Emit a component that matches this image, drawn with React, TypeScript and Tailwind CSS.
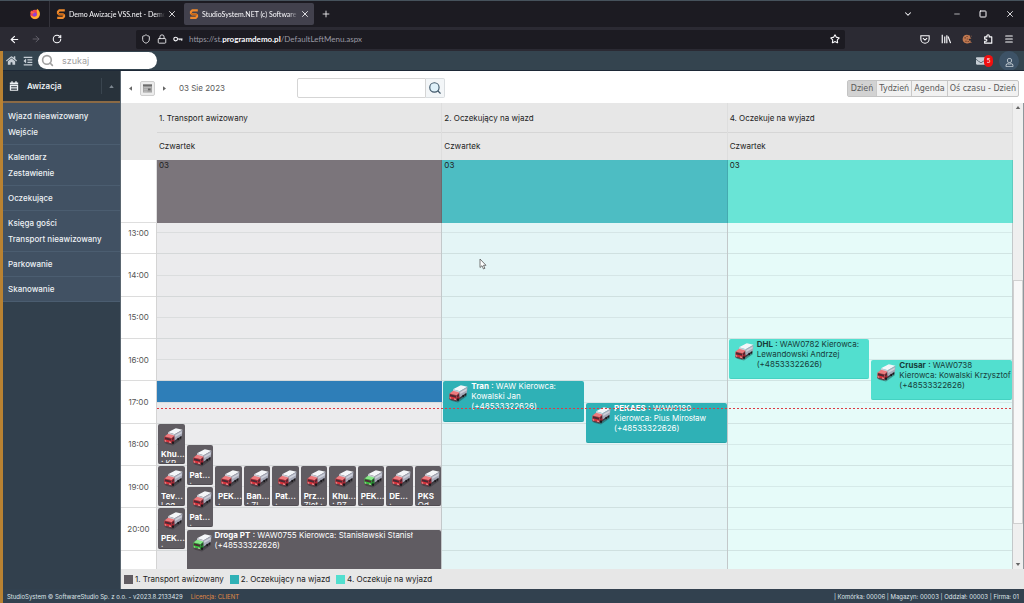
import React from "react";
import {
  ArrowLeft,
  ArrowRight,
  ChevronDown,
  Lock,
  Menu,
  Minus,
  Plus,
  RotateCw,
  Search,
  Shield,
  Square,
  Star,
  X,
} from "lucide-react";
import { FaHome, FaEnvelope, FaOutdent, FaRegUser } from "react-icons/fa";

const FIRST_HOUR = 13;
const HOURS = [13, 14, 15, 16, 17, 18, 19, 20, 21];
const LAST_LABEL = 20;

type Tone = "gray" | "teal" | "mint";

type Visit = {
  name: string;
  details: string;
  start: number;
  slot: number;
  span: number;
  slots: number;
  small?: boolean;
  green?: boolean;
};

type Lane = {
  title: string;
  tone: Tone;
  allDay: string;
  body: string;
  event: string;
  swatch: string;
  visits: Visit[];
};

const small = (name: string, details: string, start: number, slot: number, green = false): Visit => ({
  name,
  details,
  start,
  slot,
  span: 1,
  slots: 10,
  small: true,
  green,
});

const LANES: Lane[] = [
  {
    title: "1. Transport awizowany",
    tone: "gray",
    allDay: "bg-[#7b757b]",
    body: "bg-[#ebebed]",
    event: "bg-[#605c62] border-[#504c52] text-white",
    swatch: "bg-[#605c62]",
    visits: [
      small("Khu...", ": KR", 18, 0),
      small("Pat...", ":", 18.5, 1),
      small("Tev...", "Log", 19, 0),
      small("Pat...", ":", 19.5, 1),
      small("PEK...", ":", 20, 0),
      small("PEK...", ":", 19, 2),
      small("Ban...", ": ZL", 19, 3),
      small("Pat...", ":", 19, 4),
      small("Prz...", "Zlot :", 19, 5),
      small("Khu...", ": PZ", 19, 6),
      small("PEK...", ":", 19, 7, true),
      small("DE...", ":", 19, 8),
      small("PKS", "Od", 19, 9),
      {
        name: "Droga PT",
        details: "WAW0755 Kierowca: Stanisławski Stanisł (+48533322626)",
        start: 20.5,
        slot: 1,
        span: 9,
        slots: 10,
        green: true,
      },
    ],
  },
  {
    title: "2. Oczekujący na wjazd",
    tone: "teal",
    allDay: "bg-[#4dbdc3]",
    body: "bg-[#e4f5f6]",
    event: "bg-[#2fb1b6] border-[#27a3a8] text-white",
    swatch: "bg-[#2fb1b6]",
    visits: [
      { name: "Tran", details: "WAW Kierowca: Kowalski Jan (+48533322626)", start: 17, slot: 0, span: 1, slots: 2 },
      { name: "PEKAES", details: "WAW0180 Kierowca: Pius Mirosław (+48533322626)", start: 17.5, slot: 1, span: 1, slots: 2 },
    ],
  },
  {
    title: "4. Oczekuje na wyjazd",
    tone: "mint",
    allDay: "bg-[#69e4d6]",
    body: "bg-[#e6fbf9]",
    event: "bg-[#52dfcf] border-[#45d2c2] text-[#173c3a]",
    swatch: "bg-[#52dfcf]",
    visits: [
      { name: "DHL", details: "WAW0782 Kierowca: Lewandowski Andrzej (+48533322626)", start: 16, slot: 0, span: 1, slots: 2 },
      { name: "Crusar", details: "WAW0738 Kierowca: Kowalski Krzysztof (+48533322626)", start: 16.5, slot: 1, span: 1, slots: 2 },
    ],
  },
];

const MENU = [
  ["Wjazd nieawizowany", "Wejście"],
  ["Kalendarz", "Zestawienie"],
  ["Oczekujące"],
  ["Księga gości", "Transport nieawizowany"],
  ["Parkowanie"],
  ["Skanowanie"],
];

const hourOffset = (hour: number) => `${((hour - FIRST_HOUR) / HOURS.length) * 100}%`;

function Truck({ green }: { green?: boolean }) {
  const cab = green ? "#35b83a" : "#d62f38";
  const side = green ? "#1f8a2b" : "#a32430";
  const light = green ? "#86e886" : "#ee7a7d";
  return (
    <svg viewBox="0 0 20 20" className="size-5 shrink-0" aria-hidden="true">
      <path d="M2 16.500l8 2 9-6.500-1-2z" fill="#29252b" opacity=".4" />
      <path d="M10 13.500l8.500-5.300v2.200L10 16.200z" fill="#3a373e" />
      <path d="M5 5.200L12.800 1.300l6.700 1.500-7.800 4.400z" fill="#f4f6f9" />
      <path d="M11.700 7.200l7.800-4.400-.6 6-7.700 4.900z" fill="#a6a9b8" />
      <path d="M12.300 8l6.500-3.600-.2 2-6.400 3.500z" fill="#cdd0da" />
      <path d="M5 5.200l6.700 2-.4 3.300L5 8.500z" fill="#c9ccd6" />
      <path d="M1.500 9.500L5 6.700l6.300 1.900-2.500 2.700z" fill={light} />
      <path d="M1.500 9.500l7.300 1.800-.5 5.700-7-2z" fill={cab} />
      <path d="M8.800 11.300l2.500-2.700.1 5.900-3.100 2.500z" fill={side} />
      <path d="M2 10.200l6.100 1.600-.2 2-6.100-1.600z" fill="#4b2a35" />
      <path d="M9.300 11.700l1.500-1.700v2l-1.600 1.200z" fill="#3a2630" />
      <path d="M1.300 14.300l7 1.900v1.400l-6.800-2z" fill="#55414a" />
      <path d="M1.800 13.400l1.400.4v.8l-1.400-.4zM6.300 14.600l1.400.4v.8l-1.400-.4z" fill="#fbe9e0" />
      <ellipse cx="10" cy="15.700" rx="1" ry="1.400" fill="#19171b" />
      <ellipse cx="15.200" cy="12" rx=".9" ry="1.200" fill="#19171b" />
      <ellipse cx="17.400" cy="10.600" rx=".8" ry="1.100" fill="#19171b" />
    </svg>
  );
}

function SiteIcon() {
  return (
    <svg viewBox="0 0 12 12" className="size-3 shrink-0" aria-hidden="true">
      <path d="M9.800 2.300H4.400L3 3.700v1.500l1.200 1.100h3.700l1.100 1v1.300L7.700 9.800H2.200" fill="none" stroke="#ef8a2c" strokeWidth="2.200" />
      <path d="M3 5.200l1.200 1.100h3.700l1.100 1" fill="none" stroke="#c96514" strokeWidth="1.200" />
    </svg>
  );
}

function Firefox() {
  return (
    <svg viewBox="0 0 12 12" className="size-3" aria-hidden="true">
      <circle cx="6" cy="6.500" r="4.700" fill="#ef3f53" />
      <path d="M8 .8c2.300 1.500 3.200 3.600 2.800 6C10.300 9.600 8.300 11 6 11 3.400 11 1.700 9.200 1.500 7c1.700 2 5 2.300 6.300.2C9 5.200 7 4 8 .8z" fill="#ffb02e" />
      <circle cx="5.700" cy="6.500" r="2" fill="#8b43d6" />
      <path d="M1.400 5L2 2.300l1.300 1.500 2.500.3-1.300 1.400-2 .1z" fill="#ff6a3c" />
    </svg>
  );
}

function BrowserChrome() {
  return (
    <header className="shrink-0 font-[Lato,sans-serif] text-[#fbfbfe]">
      <div className="flex h-[27px] items-center border-t border-[#46525c] bg-[#1c1b22]">
        <div className="flex h-full w-[50px] items-center justify-end border-r border-[#34333b] pr-2">
          <Firefox />
        </div>
        <button className="flex h-[22px] w-[134px] items-center gap-[2px] pr-[7px] pl-[5px] text-[7px]">
          <SiteIcon />
          <span className="flex-1 overflow-hidden mask-r-from-90% text-left whitespace-nowrap">Demo Awizacje VSS.net - Demo</span>
          <X className="size-2.5" />
        </button>
        <button className="flex h-[22px] w-[130px] items-center gap-[2px] rounded-xs bg-[#42414d] pr-1 pl-1 text-[7px]">
          <SiteIcon />
          <span className="flex-1 overflow-hidden mask-r-from-90% text-left whitespace-nowrap">StudioSystem.NET (c) Software</span>
          <X className="size-2.5" />
        </button>
        <button aria-label="Nowa karta" className="ml-[7px]">
          <Plus className="size-2.5" />
        </button>
        <div className="ml-auto flex items-center pr-[9px]">
          <button aria-label="Lista kart" className="mr-[40px]">
            <ChevronDown className="size-2.5" strokeWidth={2.5} />
          </button>
          <button aria-label="Minimalizuj" className="mr-[18px]">
            <Minus className="size-2" />
          </button>
          <button aria-label="Maksymalizuj" className="mr-[18px]">
            <Square className="size-2" strokeWidth={3} />
          </button>
          <button aria-label="Zamknij">
            <X className="size-2.5" />
          </button>
        </div>
      </div>
      <div className="flex h-6 items-center bg-[#2b2a33] pl-[9px]">
        <div className="flex w-[127px] items-center gap-[11px]">
          <button aria-label="Wstecz">
            <ArrowLeft className="size-[11px]" strokeWidth={2.5} />
          </button>
          <button aria-label="Dalej" className="text-[#6a6972]">
            <ArrowRight className="size-2.5" />
          </button>
          <button aria-label="Odśwież">
            <RotateCw className="size-2.5" strokeWidth={2.5} />
          </button>
        </div>
        <div className="mr-[75px] flex h-[19px] flex-1 items-center gap-1.5 rounded-xs bg-[#1c1b22] px-[5px] text-[8px]">
          <Shield className="size-2.5" />
          <Lock className="size-2.5" />
          <svg viewBox="0 0 12 12" className="size-2.5" fill="none" stroke="currentColor" strokeWidth="1.300" aria-hidden="true">
            <circle cx="3.200" cy="6" r="2.200" />
            <path d="M5.400 6h6M10.500 6v2M8.300 6v1.500" />
          </svg>
          <a href="#adres" className="flex-1 text-[#9a99a3]">
            https://st.<b className="font-bold text-[#fbfbfe]">programdemo.pl</b>/DefaultLeftMenu.aspx
          </a>
          <Star className="size-2.5" strokeWidth={2.5} />
        </div>
        <div className="flex items-center gap-[11px] pr-[10px]">
          <svg viewBox="0 0 12 12" className="size-2.5" fill="none" stroke="currentColor" strokeWidth="1.300" aria-hidden="true">
            <path d="M1 2h10v4a5 5 0 01-10 0zM3.500 5L6 7.300 8.500 5" />
          </svg>
          <svg viewBox="0 0 12 12" className="size-2.5" fill="none" stroke="currentColor" strokeWidth="1.400" aria-hidden="true">
            <path d="M1.500 1v10M4.500 3v8M7 1.500V11M8.500 3l3 8" />
          </svg>
          <svg viewBox="0 0 12 12" className="size-2.5" aria-hidden="true">
            <path d="M6 .8a5.300 5.300 0 105 7.300L8.500 7.800 8 6l3.300-.6L9.800 4 9.500 1.900z" fill="#c07850" />
            <path d="M3 4h1.500v1.500H3zM5.500 2.500h1.200v1.200H5.500zM4 8h1.500v1.300H4zM6.800 8.500H8v1.200H6.800zM5.800 5.500h1v1h-1z" fill="#5e3423" />
            <path d="M10 9.500h1.300v1.300H10zM10.500 2h1v1h-1z" fill="#c07850" />
          </svg>
          <svg viewBox="0 0 12 12" className="size-2.5" fill="none" stroke="currentColor" strokeWidth="1.400" strokeLinejoin="round" aria-hidden="true">
            <path d="M2 3.500h2.700V2.300a1.400 1.400 0 012.800 0v1.200h3V11H2V8.700h1.300a1.300 1.300 0 000-2.600H2z" />
          </svg>
          <Menu className="size-2.5" strokeWidth={2.5} />
        </div>
      </div>
    </header>
  );
}

function TopBar() {
  return (
    <div className="flex h-5 shrink-0 items-center overflow-hidden border-b border-[#1d2836] bg-[#34444f] pl-[3px] text-[#c6ced5]">
      <a href="#start" aria-label="Strona główna">
        <FaHome className="size-[11px]" />
      </a>
      <button aria-label="Zwiń menu" className="mr-[5px] ml-1.5">
        <FaOutdent className="size-2.5" />
      </button>
      <label className="flex h-[17px] w-[119px] items-center gap-2 rounded-full bg-white pl-[3px]">
        <Search className="size-[13px] text-[#a0a0a0]" strokeWidth={3} />
        <input aria-label="szukaj" placeholder="szukaj" className="w-20 text-[9px] outline-none placeholder:text-[#a0a0a0]" />
      </label>
      <div className="ml-auto flex items-center gap-[6px] pr-[5px]">
        <a href="#wiadomosci" aria-label="Wiadomości" className="flex items-center">
          <FaEnvelope className="size-[10px]" />
          <span className="-ml-0.5 flex h-3 w-[9px] items-center justify-center rounded-full bg-[#f01010] text-[6px] text-white">5</span>
        </a>
        <button aria-label="Konto" className="flex size-5 items-center justify-center rounded-full bg-[#3d5266] pt-1">
          <FaRegUser className="size-[9px]" />
        </button>
      </div>
    </div>
  );
}

function Sidebar() {
  return (
    <aside className="flex w-[117px] shrink-0 flex-col bg-[#32404d] text-[8px] font-medium text-[#eef2f5]">
      <button className="flex h-[30px] items-center bg-[#28323b] pl-1.5 text-left">
        <svg viewBox="0 0 12 12" className="size-[10px]" aria-hidden="true">
          <path d="M1 1.800h1.800V.3h1.600v1.500h3.200V.3h1.600v1.500H11V3.800H1zM1 4.600h10v7.100H1z" fill="#eef2f5" />
          <path d="M2.500 6h7v1h-7zM2.500 8h7v1h-7zM2.500 10h7v.7h-7z" fill="#28323b" />
        </svg>
        <span className="ml-2 flex-1 font-semibold">Awizacja</span>
        <span className="flex h-4 w-[19px] items-center justify-center border-l border-[#3a454f]">
          <svg viewBox="0 0 6 4" className="h-[3px] w-[5px] fill-[#7d8790]" aria-hidden="true">
            <path d="M0 4l3-4 3 4z" />
          </svg>
        </span>
      </button>
      <nav className="border-t-2 border-[#8b6a45] bg-[#415163] pt-px">
        {MENU.map((group) => (
          <ul key={group[0]} className="border-b border-[#4b5d70] py-1">
            {group.map((item) => (
              <li key={item} className="h-4 pl-[5px] leading-4">
                <a href="#menu">{item}</a>
              </li>
            ))}
          </ul>
        ))}
      </nav>
    </aside>
  );
}

function Toolbar() {
  return (
    <div className="flex h-8 shrink-0 items-center bg-white pt-0.5 pr-[5px] pl-2 text-[#5a5a5a]">
      <button aria-label="Poprzedni dzień">
        <svg viewBox="0 0 4 6" className="h-[5px] w-[3px] fill-[#666]" aria-hidden="true">
          <path d="M4 0v6L0 3z" />
        </svg>
      </button>
      <button aria-label="Wybierz datę" className="mx-2 flex size-[15px] items-center justify-center rounded-xs border border-[#cfcfcf] bg-[#ececec]">
        <svg viewBox="0 0 10 10" className="size-[9px]" aria-hidden="true">
          <path d="M0 .5h10v9H0z" fill="#a5a5a5" />
          <path d="M0 .5h10v2H0z" fill="#6d6d6d" />
          <path d="M1 4h8M1 6h8M1 8h4" stroke="#c9c9c9" strokeWidth=".7" />
          <path d="M5.500 5h3v2h-3z" fill="#666" />
        </svg>
      </button>
      <button aria-label="Następny dzień">
        <svg viewBox="0 0 4 6" className="h-[5px] w-[3px] fill-[#666]" aria-hidden="true">
          <path d="M0 0v6l4-3z" />
        </svg>
      </button>
      <span className="ml-[13px] w-[118px] text-[8px]">03 Sie 2023</span>
      <form className="flex h-5 w-[148px]">
        <input aria-label="Szukaj w kalendarzu" className="min-w-0 flex-1 rounded-l-xs border border-[#d5d5d5] px-1 text-[8px]" />
        <button type="button" aria-label="Szukaj" className="flex w-[19px] items-center justify-center rounded-r-xs border border-l-0 border-[#d9dde0] bg-[#f3f6f8]">
          <Search className="size-3.5 fill-[#dff1fa] text-[#40586a]" />
        </button>
      </form>
      <div className="ml-auto flex h-[17px] rounded-xs border border-[#c4c4c4] bg-[#f1f1f1] font-['DejaVu_Sans',sans-serif] text-[8px]">
        <button className="bg-[#d2d2d2] px-[3px] pt-0.5">Dzień</button>
        <button className="border-l border-[#c9c9c9] px-[2px] pt-0.5">Tydzień</button>
        <button className="border-l border-[#c9c9c9] px-[2px] pt-0.5">Agenda</button>
        <button className="border-l border-[#c9c9c9] px-[2px] pt-0.5">Oś czasu - Dzień</button>
      </div>
    </div>
  );
}

function VisitCard({ visit, tone }: { visit: Visit; tone: string }) {
  const place = {
    top: hourOffset(visit.start),
    height: `${100 / HOURS.length}%`,
    left: `${(visit.slot / visit.slots) * 100}%`,
    width: `${(visit.span / visit.slots) * 100}%`,
  };
  return (
    <article className="absolute pr-px pb-0.5 pl-px" style={place}>
      {visit.small ? (
        <div className={`h-full overflow-hidden rounded-xs border-b pt-[3px] pl-[3px] leading-[10px] ${tone}`}>
          <div className="pl-0.5">
            <Truck green={visit.green} />
          </div>
          <b className="mt-0.5 block whitespace-nowrap">{visit.name}</b>
          <span className="block leading-2 whitespace-nowrap">{visit.details}</span>
        </div>
      ) : (
        <div className={`flex h-full items-start gap-[3px] overflow-hidden rounded-xs border-b pr-px pl-[5px] leading-[10px] ${tone}`}>
          <div className="pt-[3px]">
            <Truck green={visit.green} />
          </div>
          <p className={visit.span > 1 ? "max-w-[212px]" : ""}>
            <b>{visit.name}</b> : {visit.details}
          </p>
        </div>
      )}
    </article>
  );
}

function LaneBody({ lane }: { lane: Lane }) {
  return (
    <div className={`relative border-r border-[#c3c8ca] ${lane.body}`}>
      <div className="grid h-full auto-rows-fr">
        {HOURS.map((hour) => (
          <div key={hour} className="flex flex-col border-b border-[#7d8a8c]/20">
            <div className="flex-1 border-b border-[#7d8a8c]/15" />
            <div className="flex-1" />
          </div>
        ))}
      </div>
      <div className="absolute inset-y-0 -right-px left-0">
        {lane.tone === "gray" && (
          <div className="absolute inset-x-0 bg-[#2e7eb8]" style={{ top: hourOffset(17), height: `${50 / HOURS.length}%` }} />
        )}
        {lane.visits.map((visit, i) => (
          <VisitCard key={i} visit={visit} tone={lane.event} />
        ))}
      </div>
      {lane.tone === "teal" && (
        <svg viewBox="0 0 8 12" className="absolute top-[12%] left-[13%] h-3 w-2" aria-hidden="true">
          <path d="M1 1v8.500l2-1.800 1.500 3.300 1.400-.7-1.400-3H7z" fill="#fff" stroke="#555" strokeWidth=".8" />
        </svg>
      )}
    </div>
  );
}

function ScrollBar() {
  return (
    <div className="flex w-[11px] shrink-0 flex-col items-center border-r border-[#8f979c] bg-[#efefef]" aria-hidden="true">
      <svg viewBox="0 0 6 4" className="my-[3px] h-[3px] w-1.5 fill-[#666]">
        <path d="M0 4l3-4 3 4z" />
      </svg>
      <div className="grow-[169]" />
      <div className="w-full grow-[243] border border-[#d0d0d0] bg-[#f8f8f8]" />
      <div className="grow-[36]" />
      <svg viewBox="0 0 6 4" className="my-[3px] h-[3px] w-1.5 fill-[#666]">
        <path d="M0 0l3 4 3-4z" />
      </svg>
    </div>
  );
}

const COLUMNS = "grid grid-cols-[36px_repeat(3,minmax(0,1fr))]";

function Calendar() {
  return (
    <div className="flex min-h-0 flex-1 text-[8px] text-[#222]">
      <div className="flex min-w-0 flex-1 flex-col">
        <div className={`shrink-0 bg-[#e7e7e7] ${COLUMNS}`}>
          <div />
          {LANES.map((lane) => (
            <div key={lane.title} className="border-r border-[#dedede]">
              <h2 className="border-b border-[#d6d6d6] pt-px pl-0.5 leading-7">{lane.title}</h2>
              <div className="pl-0.5 leading-[27px]">Czwartek</div>
            </div>
          ))}
        </div>
        <div className={`h-[63px] shrink-0 ${COLUMNS}`}>
          <div className="border-r border-b border-[#dedede] bg-white" />
          {LANES.map((lane) => (
            <div key={lane.title} className={`border-r border-black/10 pl-0.5 leading-[11px] ${lane.allDay}`}>
              03
            </div>
          ))}
        </div>
        <div className="min-h-0 flex-1 overflow-hidden">
          <div className={`relative -mt-[11px] h-[381px] ${COLUMNS}`}>
            <div className="grid auto-rows-fr border-r border-[#d4d4d4] bg-white text-[#555]">
              {HOURS.map((hour) => (
                <div key={hour} className="flex items-center justify-center border-b border-[#dcdcdc]">
                  {hour <= LAST_LABEL && `${hour}:00`}
                </div>
              ))}
            </div>
            {LANES.map((lane) => (
              <LaneBody key={lane.title} lane={lane} />
            ))}
            <div
              className="absolute right-0 left-9 h-px bg-[repeating-linear-gradient(90deg,#dc3b44_0_2px,transparent_2px_4px)]"
              style={{ top: hourOffset(17.64) }}
            />
          </div>
        </div>
      </div>
      <ScrollBar />
    </div>
  );
}

export default function App() {
  return (
    <div className="flex h-screen min-h-[603px] flex-col overflow-hidden font-[Inter,'Noto_Sans',sans-serif]">
      <BrowserChrome />
      <div className="flex min-h-0 flex-1 flex-col border-l-3 border-[#b98232]">
        <TopBar />
        <div className="flex min-h-0 flex-1">
          <Sidebar />
          <main className="flex min-w-0 flex-1 flex-col border-l border-[#5a6670]">
            <Toolbar />
            <Calendar />
            <ul className="flex h-5 shrink-0 items-center gap-1.5 bg-[#e7e7e7] pl-[3px] text-[8px] text-[#222]">
              {LANES.map((lane) => (
                <li key={lane.title} className="flex items-center gap-[2px]">
                  <span className={`h-[9px] w-[9px] ${lane.swatch}`} />
                  {lane.title}
                </li>
              ))}
            </ul>
          </main>
        </div>
        <footer className="flex h-3.5 shrink-0 items-center bg-[#32414f] pr-[5px] pl-1 text-[6px] text-[#dfe5ea]">
          <span>StudioSystem © SoftwareStudio Sp. z o.o. - v2023.8.2133429</span>
          <span className="ml-2 text-[#e08a45]">Licencja: CLIENT</span>
          <span className="ml-auto">| Komórka: 00006 | Magazyn: 00003 | Oddział: 00003 | Firma: 01</span>
        </footer>
      </div>
    </div>
  );
}
